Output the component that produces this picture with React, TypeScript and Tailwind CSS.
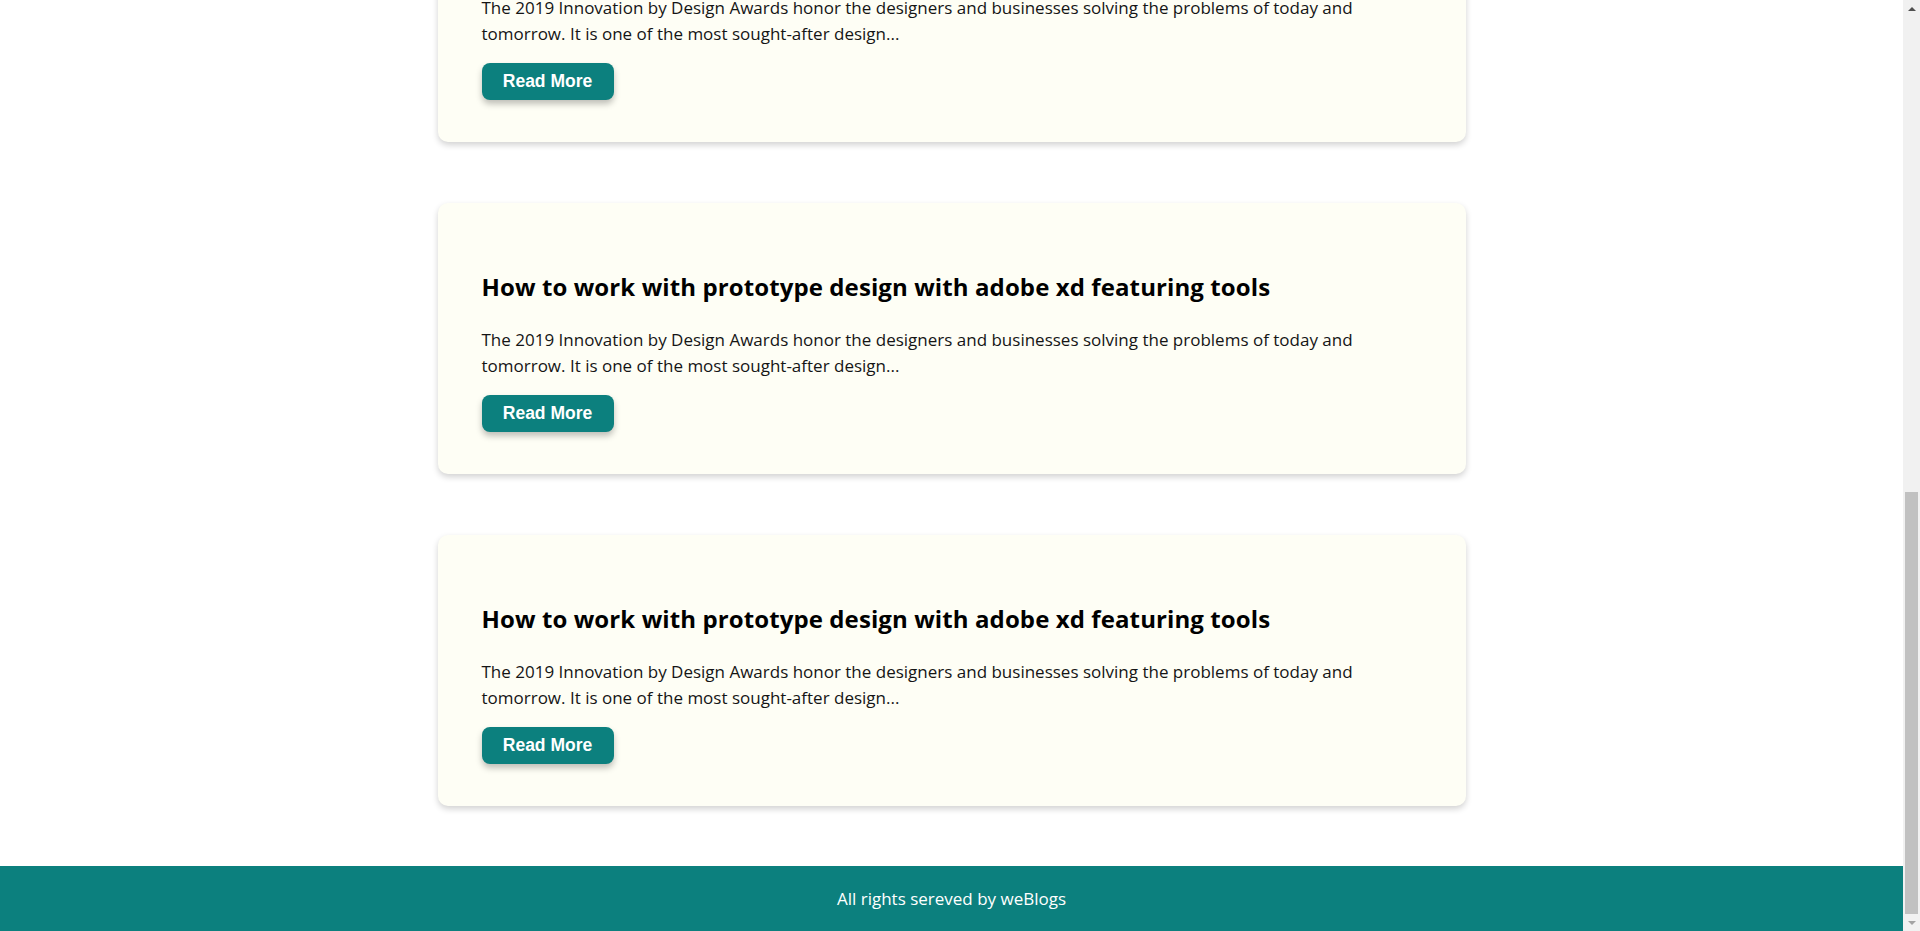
import React, { useEffect } from "react";

const posts = Array.from({ length: 5 }, (_, i) => ({
  id: i,
  title: "How to work with prototype design with adobe xd featuring tools",
  excerpt:
    "The 2019 Innovation by Design Awards honor the designers and businesses solving the problems of today and tomorrow. It is one of the most sought-after design...",
}));

const BlogCard: React.FC<{ title: string; excerpt: string }> = ({ title, excerpt }) => {
  return (
    <div className="w-[1028px] mx-auto bg-[#fefef5] rounded-[10px] shadow-[0_3px_6px_rgba(0,0,0,0.18)] px-11 pt-[66px] pb-[42px]">
      <h2 className="text-[24px] leading-[36px] font-bold text-black tracking-[0.1px]">{title}</h2>
      <p className="mt-[22px] text-[17px] leading-[26px] text-[#151515] pr-10">{excerpt}</p>
      <button className="mt-4 h-[37px] w-[132px] rounded-[8px] bg-[#0c807e] text-white text-[17.5px] font-bold shadow-[0_4px_6px_rgba(0,0,0,0.25)] [font-family:'Liberation_Sans',Arial,sans-serif]">
        Read More
      </button>
    </div>
  );
};

// the browser hides its own scrollbar, so draw the one the reference shows
const ScrollBar: React.FC = () => (
  <div className="fixed top-0 right-0 h-screen w-[17px] bg-[#f1f1f1] flex flex-col items-center">
    <div className="h-[17px] flex items-center justify-center">
      <div className="w-0 h-0 border-l-[4px] border-r-[4px] border-b-[4px] border-l-transparent border-r-transparent border-b-[#505050]" />
    </div>
    <div className="flex-1 w-full flex flex-col justify-end px-[2px]">
      <div className="h-[422px] w-full bg-[#c1c1c1]" />
    </div>
    <div className="h-[17px] flex items-center justify-center">
      <div className="w-0 h-0 border-l-[4px] border-r-[4px] border-t-[4px] border-l-transparent border-r-transparent border-t-[#a3a3a3]" />
    </div>
  </div>
);

export default function App() {
  useEffect(() => {
    window.scrollTo(0, document.documentElement.scrollHeight);
  }, []);

  return (
    <div className="bg-white min-h-screen pr-[17px] [font-family:'Open_Sans',sans-serif] text-black">
      <nav className="h-[70px] bg-[#0c807e] flex items-center px-10">
        <span className="text-white text-2xl font-bold">weBlogs</span>
      </nav>
      <div className="h-[186px]" />
      <div className="flex flex-col gap-[61px]">
        {posts.map((p) => (
          <BlogCard key={p.id} title={p.title} excerpt={p.excerpt} />
        ))}
      </div>
      <footer className="mt-[60px] h-[65px] bg-[#0c807e] flex items-center justify-center">
        <span className="text-white text-[17px]">All rights sereved by weBlogs</span>
      </footer>
      <ScrollBar />
    </div>
  );
}
